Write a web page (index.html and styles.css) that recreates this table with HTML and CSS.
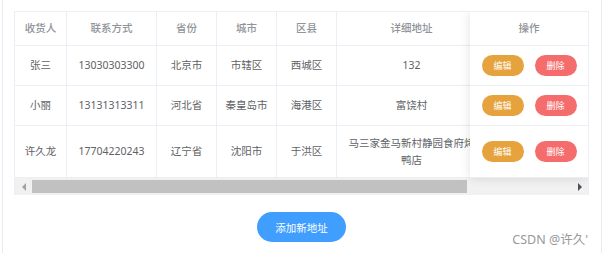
FILE: index.html
```html
<!DOCTYPE html>
<html lang="zh-CN">
<head>
    <meta charset="UTF-8">
    <meta name="viewport" content="width=device-width, initial-scale=1.0">
    <title>收货地址</title>
    <link rel="stylesheet" href="styles.css">
</head>
<body>
<div class="card">
    <div class="table_wrap">
        <!-- main table, the last column sits under the fixed one -->
        <table class="addr_table">
            <colgroup>
                <col style="width: 52px">
                <col style="width: 90px">
                <col style="width: 60px">
                <col style="width: 60px">
                <col style="width: 60px">
                <col style="width: 150px">
                <col style="width: 243px">
            </colgroup>
            <thead>
                <tr>
                    <th>收货人</th>
                    <th>联系方式</th>
                    <th>省份</th>
                    <th>城市</th>
                    <th>区县</th>
                    <th>详细地址</th>
                    <th></th>
                </tr>
            </thead>
            <tbody>
                <tr>
                    <td>张三</td>
                    <td>13030303300</td>
                    <td>北京市</td>
                    <td>市辖区</td>
                    <td>西城区</td>
                    <td>132</td>
                    <td></td>
                </tr>
                <tr>
                    <td>小丽</td>
                    <td>13131313311</td>
                    <td>河北省</td>
                    <td>秦皇岛市</td>
                    <td>海港区</td>
                    <td>富饶村</td>
                    <td></td>
                </tr>
                <tr class="tall">
                    <td>许久龙</td>
                    <td>17704220243</td>
                    <td>辽宁省</td>
                    <td>沈阳市</td>
                    <td>于洪区</td>
                    <td>马三家金马新村静园食府烤鸭店</td>
                    <td></td>
                </tr>
            </tbody>
        </table>

        <!-- fixed right column -->
        <div class="fixed_right">
            <table class="addr_table">
                <thead>
                    <tr><th>操作</th></tr>
                </thead>
                <tbody>
                    <tr><td><button class="btn btn_edit">编辑</button><button class="btn btn_del">删除</button></td></tr>
                    <tr><td><button class="btn btn_edit">编辑</button><button class="btn btn_del">删除</button></td></tr>
                    <tr class="tall"><td><button class="btn btn_edit">编辑</button><button class="btn btn_del">删除</button></td></tr>
                </tbody>
            </table>
        </div>

        <div class="scrollbar">
            <div class="sb_btn"><span class="arrow_left"></span></div>
            <div class="sb_track"><div class="sb_thumb"></div></div>
            <div class="sb_btn"><span class="arrow_right"></span></div>
        </div>
    </div>

    <div class="actions">
        <button class="btn_add">添加新地址</button>
    </div>

    <div class="mark">CSDN @许久'</div>
</div>
</body>
</html>
```

FILE: styles.css
```css
* {
    box-sizing: border-box;
}

body {
    margin: 0;
    background: #fff;
    font-family: "Noto Sans", "Noto Sans CJK SC", sans-serif;
}

.card {
    position: relative;
    width: 600px;
    height: 253px;
    margin-left: 2px;
    padding: 11px 12px 0 11px;
    border-left: 1px solid #e8eaef;
    border-right: 1px solid #e8eaef;
}

.table_wrap {
    position: relative;
    width: 575px;
    overflow: hidden;
    border: 1px solid #ebeef5;
    border-bottom: none;
}

.addr_table {
    table-layout: fixed;
    border-collapse: separate;
    border-spacing: 0;
    width: 715px;
    font-size: 10.5px;
    color: #606266;
}

.addr_table th,
.addr_table td {
    padding: 8px 7px;
    line-height: 17px;
    text-align: center;
    border-right: 1px solid #ebeef5;
    border-bottom: 1px solid #ebeef5;
    vertical-align: middle;
}

.addr_table th {
    height: 34px;
    color: #909399;
    font-weight: 500;
}

.addr_table td {
    height: 40px;
}

.addr_table .tall td {
    height: 52px;
}

.fixed_right {
    position: absolute;
    top: 0;
    right: 0;
    width: 118px;
    background: #fff;
    box-shadow: 0 0 10px rgba(0, 0, 0, .12);
}

.fixed_right .addr_table {
    width: 118px;
}

.fixed_right th,
.fixed_right td {
    border-right: none;
    padding: 8px 0;
}

.btn {
    display: inline-block;
    width: 42px;
    height: 21px;
    padding: 0;
    border: none;
    border-radius: 11px;
    color: #fff;
    font-family: inherit;
    font-size: 9px;
    line-height: 21px;
    vertical-align: middle;
}

.btn + .btn {
    margin-left: 11px;
}

.btn_edit {
    background: #e6a23c;
}

.btn_del {
    background: #f56c6c;
}

/* scrollbar drawn under the body */
.scrollbar {
    display: flex;
    height: 17px;
    background: #f1f1f1;
}

.sb_btn {
    width: 17px;
    display: flex;
    align-items: center;
    justify-content: center;
}

.sb_track {
    flex: 1;
    padding: 2px 0;
}

.sb_thumb {
    width: 435px;
    height: 100%;
    background: #c1c1c1;
}

.arrow_left {
    border-top: 4px solid transparent;
    border-bottom: 4px solid transparent;
    border-right: 4px solid #a3a3a3;
}

.arrow_right {
    border-top: 4px solid transparent;
    border-bottom: 4px solid transparent;
    border-left: 4px solid #505050;
}

.actions {
    display: flex;
    justify-content: center;
    margin-top: 17px;
}

.btn_add {
    height: 30px;
    padding: 0 18px;
    border: none;
    border-radius: 15px;
    background: #409eff;
    color: #fff;
    font-family: inherit;
    font-size: 10.5px;
}

.mark {
    position: absolute;
    right: 13px;
    bottom: 5px;
    font-size: 12.5px;
    color: #999;
}
```
